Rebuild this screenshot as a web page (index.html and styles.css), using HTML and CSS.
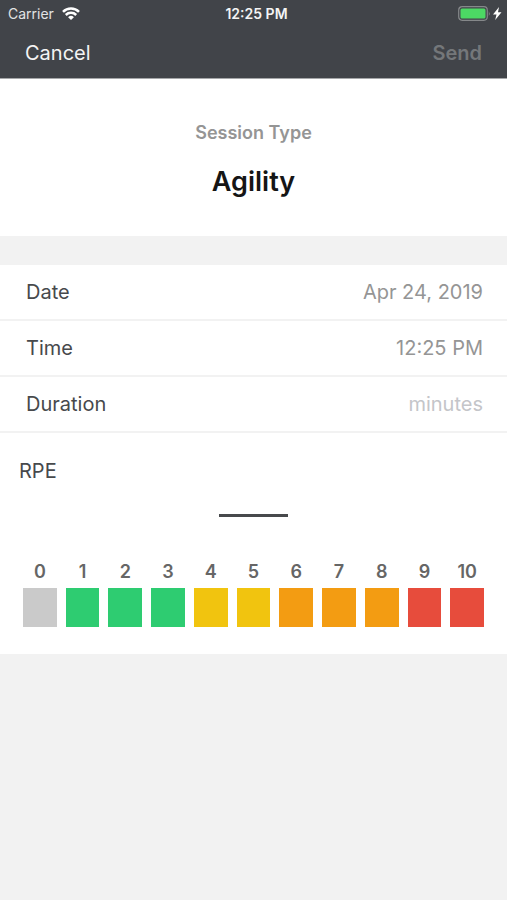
FILE: index.html
```html
<!DOCTYPE html>
<html lang="en">
<head>
    <meta charset="UTF-8" />
    <meta name="viewport" content="width=device-width, initial-scale=1.0" />
    <title>New Session</title>
    <link rel="stylesheet" href="styles.css">
</head>
<body>
    <form id="sessionForm">
        <header class="header">
            <div class="status-bar">
                <div class="carrier">
                    Carrier
                    <svg width="18" height="13" viewBox="0 0 18 13" fill="none" stroke="currentColor" stroke-width="2.5">
                        <path d="M1 4.9 A11.3 11.3 0 0 1 17 4.9"></path>
                        <path d="M3.8 8 A7.4 7.4 0 0 1 14.2 8"></path>
                        <path d="M9 13 L6.1 10.2 A4.1 4.1 0 0 1 11.9 10.2 Z" fill="currentColor" stroke="none"></path>
                    </svg>
                </div>
                <div class="clock">12:25 PM</div>
                <div class="battery">
                    <svg width="44" height="15" viewBox="0 0 44 15">
                        <rect x="0.7" y="0.7" width="28.6" height="13.6" rx="3.5" fill="none" stroke="#85888a" stroke-width="1.2"></rect>
                        <rect x="2.5" y="2.5" width="25" height="10" rx="1.5" fill="#4cd964"></rect>
                        <path d="M30.8 5 Q32.6 7.5 30.8 10 Z" fill="#85888a"></path>
                        <path d="M41 1 L35 8.5 L38.5 8.5 L37.2 14 L43.5 6.3 L40 6.3 Z" fill="#fff"></path>
                    </svg>
                </div>
            </div>
            <nav class="nav-bar">
                <button type="button" class="nav-button">Cancel</button>
                <button type="submit" class="nav-button send" disabled>Send</button>
            </nav>
        </header>

        <section class="session-type">
            <h2>Session Type</h2>
            <h1>Agility</h1>
        </section>

        <section class="fields">
            <div class="row">
                <label for="date">Date</label>
                <input type="text" id="date" name="date" value="Apr 24, 2019" readonly />
            </div>
            <div class="row">
                <label for="time">Time</label>
                <input type="text" id="time" name="time" value="12:25 PM" readonly />
            </div>
            <div class="row">
                <label for="duration">Duration</label>
                <input type="text" id="duration" name="duration" inputmode="numeric" placeholder="minutes" />
            </div>
        </section>

        <section class="rpe">
            <h3 id="rpeTitle">RPE</h3>
            <output class="rpe-value" id="rpeValue"></output>
            <div class="scale" role="radiogroup" aria-labelledby="rpeTitle">
                <label>0<input type="radio" name="rpe" value="0" class="rest" /></label>
                <label>1<input type="radio" name="rpe" value="1" class="easy" /></label>
                <label>2<input type="radio" name="rpe" value="2" class="easy" /></label>
                <label>3<input type="radio" name="rpe" value="3" class="easy" /></label>
                <label>4<input type="radio" name="rpe" value="4" class="moderate" /></label>
                <label>5<input type="radio" name="rpe" value="5" class="moderate" /></label>
                <label>6<input type="radio" name="rpe" value="6" class="hard" /></label>
                <label>7<input type="radio" name="rpe" value="7" class="hard" /></label>
                <label>8<input type="radio" name="rpe" value="8" class="hard" /></label>
                <label>9<input type="radio" name="rpe" value="9" class="max" /></label>
                <label>10<input type="radio" name="rpe" value="10" class="max" /></label>
            </div>
        </section>
    </form>

    <script>
        const form = document.getElementById("sessionForm");

        form.addEventListener("input", () => {
            const rpe = form.elements.rpe.value;
            document.getElementById("rpeValue").textContent = rpe;
            // Send needs both a duration and a rating
            form.querySelector(".send").disabled = !rpe || !form.elements.duration.value;
        });

        form.addEventListener("submit", (e) => e.preventDefault());
    </script>
</body>
</html>
```
FILE: styles.css
```css
:root {
  --header: #414449;
  --page: #f2f2f2;
  --text: #47494c;
  --muted: #959595;
  --line: #f2f2f2;
}

* {
  box-sizing: border-box;
}

body {
  margin: 0;
  min-height: 100vh;
  background-color: var(--page);
  color: var(--text);
  font-family: Inter, "Liberation Sans", sans-serif;
  font-size: 20px;
  line-height: 24px;
}

h1, h2, h3 {
  margin: 0;
}

button,
input {
  font: inherit;
  padding: 0;
  border: none;
  background: none;
}

/* Header */
.header {
  background-color: var(--header);
  color: #f4f4f4;
  border-bottom: 1px solid #a5a7a9;
}

.status-bar {
  display: grid;
  grid-template-columns: 1fr auto 1fr;
  align-items: center;
  height: 27px;
  padding: 0 5px 0 8px;
  font-size: 14px;
}

.status-bar svg {
  display: block;
}

.carrier {
  display: flex;
  align-items: center;
  gap: 8px;
  color: #e2e3e4;
}

.carrier svg {
  color: #fff;
}

.clock {
  padding-left: 3px;
  font-weight: 600;
}

.battery {
  justify-self: end;
}

.nav-bar {
  display: flex;
  justify-content: space-between;
  align-items: center;
  height: 51px;
  padding: 0 25px;
}

.nav-button {
  color: inherit;
  cursor: pointer;
}

.send {
  font-weight: 600;
}

.send:disabled {
  color: #74777a;
  cursor: default;
}

/* Session type */
.session-type {
  padding: 42px 24px 36px;
  background-color: #fff;
  text-align: center;
}

.session-type h2 {
  color: var(--muted);
  font-size: 18px;
  font-weight: 600;
}

.session-type h1 {
  margin-top: 19px;
  color: #151515;
  font-size: 27px;
  font-weight: 600;
  line-height: 36px;
}

/* Fields */
.fields {
  margin-top: 29px;
  background-color: #fff;
}

.row {
  display: flex;
  align-items: center;
  height: 56px;
  padding: 0 24px 0 26px;
  border-bottom: 2px solid var(--line);
}

.row input {
  flex: 1;
  min-width: 0;
  color: var(--muted);
  text-align: right;
  outline: none;
}

.row input::placeholder {
  color: #c4c5c9;
  opacity: 1;
}

/* RPE */
.rpe {
  padding: 26px 23px 27px;
  background-color: #fff;
}

.rpe h3 {
  margin-left: -4px;
  font-size: 20px;
  font-weight: 400;
}

.rpe-value {
  display: block;
  width: 69px;
  height: 34px;
  margin: 0 auto;
  border-bottom: 3px solid var(--text);
  text-align: center;
}

.scale {
  display: grid;
  grid-template-columns: repeat(11, 1fr);
  gap: 9px;
  margin-top: 43px;
}

.scale label {
  display: flex;
  flex-direction: column;
  align-items: center;
  gap: 4px;
  color: #666;
  font-size: 18px;
  font-weight: 600;
  cursor: pointer;
}

.scale input {
  appearance: none;
  width: 100%;
  height: 39px;
  margin: 0;
  cursor: pointer;
}

.rest {
  background-color: #cacaca;
}

.easy {
  background-color: #2ecc71;
}

.moderate {
  background-color: #f1c40f;
}

.hard {
  background-color: #f39c12;
}

.max {
  background-color: #e74c3c;
}
```
